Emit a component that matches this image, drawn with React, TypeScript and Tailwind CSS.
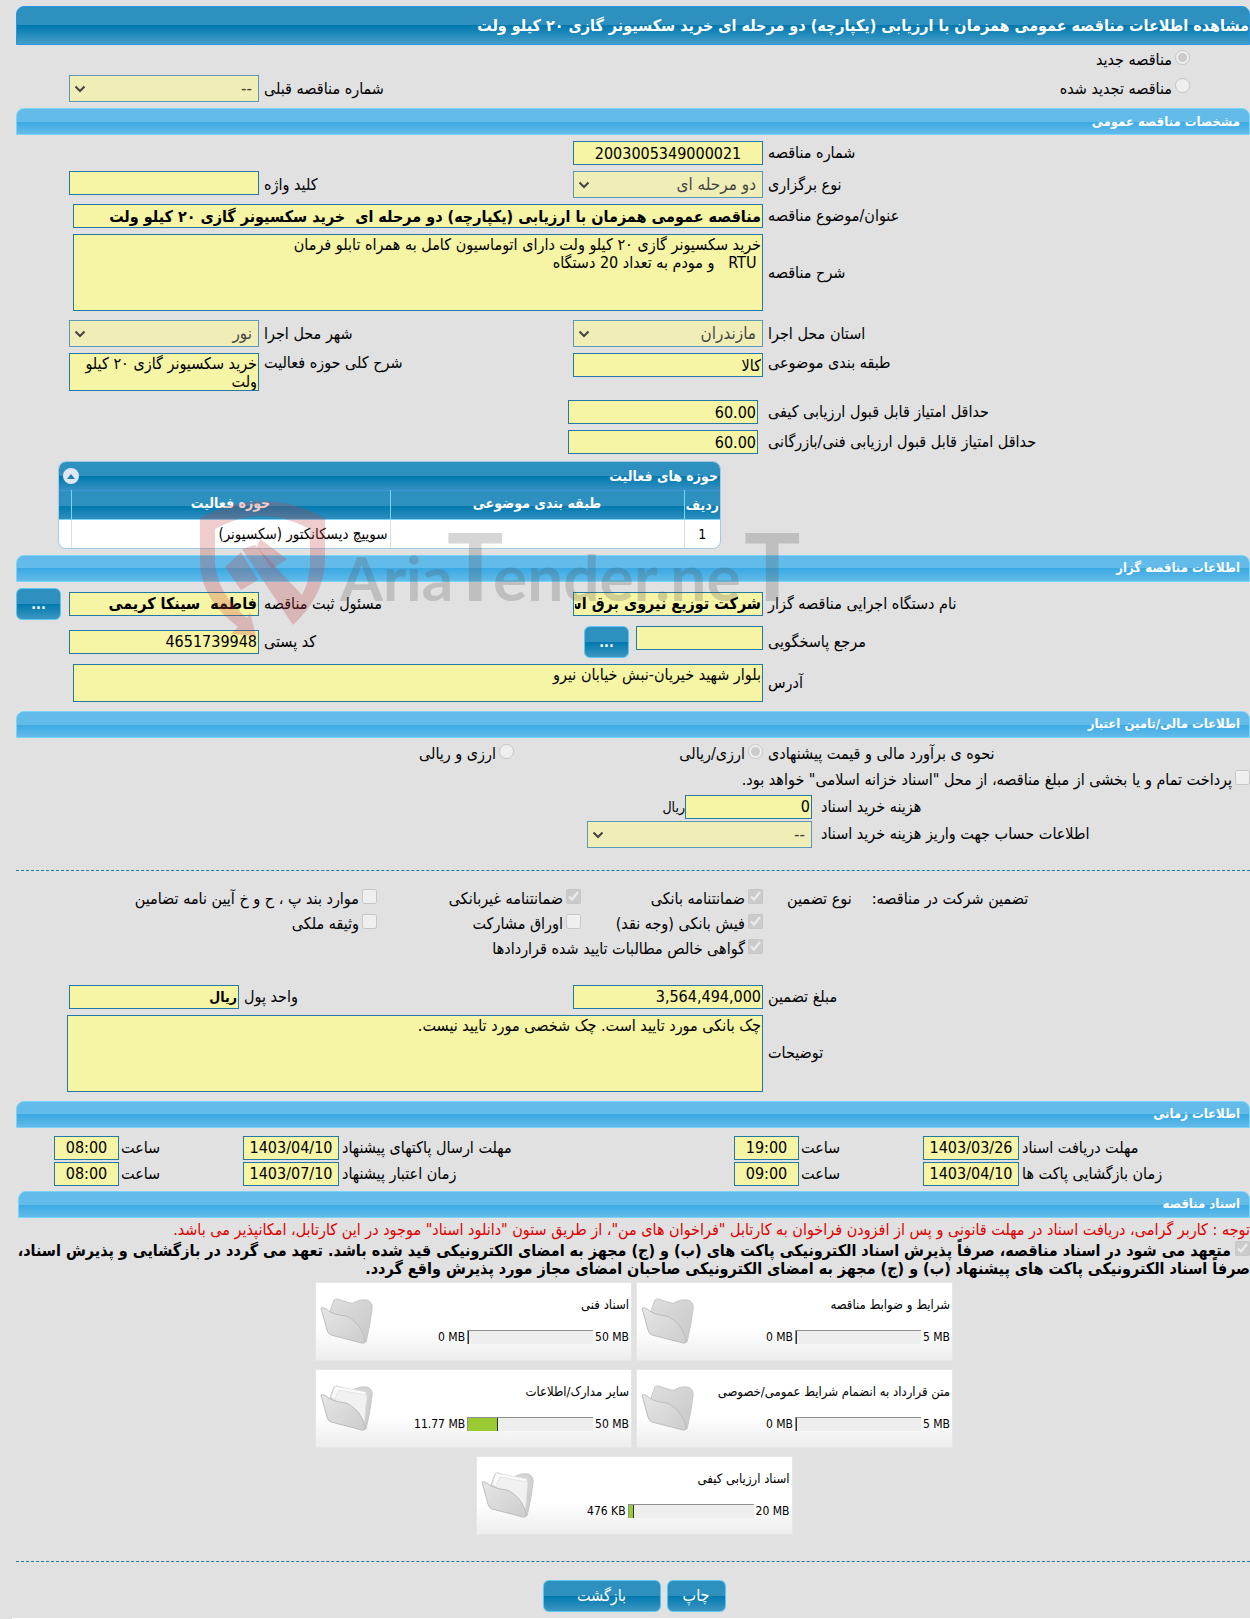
import { useState, type ReactNode } from "react";
import clsx from "clsx";

const inputStyle = "block h-[24px] w-full rounded-none border border-[#2478a5] bg-[#f6f4a5] px-px leading-[20px] text-black outline-none";
const areaStyle = "block w-full resize-none overflow-hidden rounded-none border border-[#2478a5] bg-[#f6f4a5] px-px pt-px leading-[18px] text-black outline-none";
const selectStyle = "block h-[27px] w-full appearance-none rounded-none border border-[#2478a5] bg-[#f6f4a5] pr-[6px] pl-5 text-[17px] text-black";
const rowStyle = "mt-[6px] grid grid-cols-[1fr_190px_314px_190px_53px] pl-4";
const wideRowStyle = "mt-[6px] grid grid-cols-[1fr_690px] pl-[73px]";
const timeRowStyle = "grid grid-cols-[1fr_96px_124px_65px_395px_96px_124px_65px] pl-[54px]";
const buttonStyle =
  "rounded-md border border-[#5cc8f2] bg-[linear-gradient(#2e90be_50%,#0078ae_50%,#3d97c3)] text-white";

type Doc = {
  title: string;
  used: string;
  total: string;
  percent: number;
};

const docs: Doc[] = [
  { title: "شرایط و ضوابط مناقصه", used: "0 MB", total: "5 MB", percent: 0 },
  { title: "اسناد فنی", used: "0 MB", total: "50 MB", percent: 0 },
  { title: "متن قرارداد به انضمام شرایط عمومی/خصوصی", used: "0 MB", total: "5 MB", percent: 0 },
  { title: "سایر مدارک/اطلاعات", used: "11.77 MB", total: "50 MB", percent: 24 },
  { title: "اسناد ارزیابی کیفی", used: "476 KB", total: "20 MB", percent: 4 },
];

const SectionBar = ({ children, className }: { children: ReactNode; className?: string }) => (
  <h2
    className={clsx(
      "flex h-[27px] items-center rounded-t-lg border border-[#79d4f7] bg-[linear-gradient(#62bbe9_50%,#3ba9e3_50%,#62bbe9)] pr-[9px] text-[13px] font-bold text-white",
      className,
    )}
  >
    {children}
  </h2>
);

const Label = ({ id, children, className }: { id: string; children: ReactNode; className?: string }) => (
  <label htmlFor={id} className={clsx("self-center pl-[5px] text-left leading-5", className)}>
    {children}
  </label>
);

type TextProps = { id: string; value?: string; className?: string };

const TextInput = ({ id, value = "", className }: TextProps) => (
  <input id={id} type="text" readOnly value={value} className={clsx(inputStyle, className)} />
);

const Select = ({ id, value }: TextProps) => (
  <div className="relative opacity-70">
    <select id={id} disabled className={selectStyle}>
      <option>{value}</option>
    </select>
    <svg viewBox="0 0 12 8" className="pointer-events-none absolute top-[10px] left-[5px] h-2 w-3" aria-hidden="true">
      <path d="M1.5 1.5 L6 6 L10.5 1.5" fill="none" stroke="#000000" strokeWidth="2" />
    </svg>
  </div>
);

type CheckProps = {
  id: string;
  label: string;
  checked?: boolean;
  type?: "checkbox" | "radio";
  className?: string;
};

const Check = ({ id, label, checked = false, type = "checkbox", className }: CheckProps) => (
  <div className={clsx("flex items-center gap-[3px]", className)}>
    <input id={id} type={type} disabled checked={checked} readOnly className="mb-[6px] h-[15px] w-[15px] shrink-0" />
    <label htmlFor={id}>{label}</label>
  </div>
);

const Folder = ({ full }: { full: boolean }) => (
  <svg viewBox="0 0 54 47" className="h-[47px] w-[54px]" aria-hidden="true">
    <defs>
      <linearGradient id="folderBack" x1="0" y1="0" x2="1" y2="1">
        <stop offset="0" stopColor="#dedede" />
        <stop offset="1" stopColor="#c8c8c8" />
      </linearGradient>
      <linearGradient id="folderFront" x1="0" y1="0" x2="1" y2="1">
        <stop offset="0" stopColor="#e6e6e6" />
        <stop offset="1" stopColor="#cdcdcd" />
      </linearGradient>
    </defs>
    <path d="M10 13 L14 2 Q15 1 17 1 L30 5 Q33 6 35 4 Q40 1 47 2 Q53 4 52 11 Q50 28 46 44 L40 44 Z" fill="url(#folderBack)" stroke="#c6c6c6" />
    {full && (
      <>
        <path d="M11 12 L15 1 L46 7 L45 36 L40 30 Z" fill="#fbfbfb" stroke="#dcdcdc" strokeWidth="0.7" />
        <path d="M15 13 L19 5 L47 10 L44 38 L38 26 Z" fill="#f1f1f1" stroke="#dedede" strokeWidth="0.7" />
      </>
    )}
    <path d="M1 10 Q3 9 6 11 C12 16 18 17 26 18 C34 21 43 31 45 42 Q45 46 42 45 L11 37 Q8 36 7 32 Z" fill="url(#folderFront)" stroke="#bdbdbd" strokeLinejoin="round" />
  </svg>
);

const DocCard = ({ doc }: { doc: Doc }) => (
  <div className="flex h-[79px] w-[317px] items-center justify-between border border-[#e6e6e6] bg-[linear-gradient(#ffffff_60%,#ededed)] pr-[2px] pl-1">
    <div className="flex flex-col gap-4">
      <div className="h-4 w-0 text-[13px] leading-4 whitespace-nowrap">{doc.title}</div>
      <div className="flex items-center gap-[2px] text-xs leading-4">
        <span dir="ltr">{doc.total}</span>
        <div dir="ltr" className="h-[14px] w-[126px] border-t border-l border-[#8f8f8f] bg-[#eeeeee]">
          <div className="h-full border-r border-[#333333] bg-[#9aca32]" style={{ width: `${doc.percent}%`, minWidth: 1 }} />
        </div>
        <span dir="ltr">{doc.used}</span>
      </div>
    </div>
    <Folder full={doc.percent > 0} />
  </div>
);

// Shield and site name laid over the middle of the form
const Watermark = () => (
  <svg viewBox="0 0 610 150" className="pointer-events-none absolute top-[495px] left-[195px] w-[610px]" aria-hidden="true">
    <g fill="#c43c3c" fillOpacity="0.26">
      <path
        fillRule="evenodd"
        d="M5 23 Q35 6 67 6 Q99 6 130 23 V68 Q128 102 98 130 L47 54 L60 50 L107 100 Q115 85 115 68 V34 Q91 21 67 21 Q43 21 20 34 V68 Q22 98 52 123 L55 117 L61 141 L36 139 L43 132 Q6 104 5 68 Z"
      />
      <path d="M30 72 L46 57 L63 85 L46 95 Z" />
      <path d="M65 44 L92 64 L77 74 L62 52 Z" />
    </g>
    <text
      y="106"
      fontWeight="bold"
      fill="#555555"
      fillOpacity="0.24"
      direction="ltr"
      className="font-[Lato,'Liberation_Sans',sans-serif]"
    >
      <tspan x="145" fontSize="62">Aria</tspan>
      <tspan x="252" fontSize="94">T</tspan>
      <tspan x="298" fontSize="64">ender.ne</tspan>
      <tspan x="549" fontSize="94">T</tspan>
    </text>
  </svg>
);

const App = () => {
  const [open, setOpen] = useState(true);

  return (
    <main
      dir="rtl"
      className="relative min-h-screen overflow-hidden bg-[#e1e1e1] pt-[6px] font-['DejaVu_Sans_Condensed','DejaVu_Sans',sans-serif] text-base text-black"
    >
      <h1 className="ml-4 flex h-[39px] items-center rounded-t-lg border border-[#2694e8] bg-[linear-gradient(#2e90be_50%,#0078ae_50%,#459fc9)] font-bold text-white">
        مشاهده اطلاعات مناقصه عمومی همزمان با ارزیابی (یکپارچه) دو مرحله ای خرید سکسیونر گازی ۲۰ کیلو ولت
      </h1>

      {/* Tender kind */}
      <div className="flex h-[30px] items-center pr-[60px]">
        <Check id="newTender" type="radio" label="مناقصه جدید" checked />
      </div>
      <div className="flex h-[27px] items-center pr-[60px] pl-[69px]">
        <Check id="renewedTender" type="radio" label="مناقصه تجدید شده" className="flex-1" />
        <Label id="previousNumber">شماره مناقصه قبلی</Label>
        <div className="w-[190px]">
          <Select id="previousNumber" value="--" />
        </div>
      </div>

      {/* General */}
      <SectionBar className="mt-[6px] ml-4">مشخصات مناقصه عمومی</SectionBar>
      <div className={rowStyle}>
        <Label id="tenderNumber">شماره مناقصه</Label>
        <TextInput id="tenderNumber" value="2003005349000021" className="text-center" />
      </div>
      <div className={rowStyle}>
        <Label id="tenderType">نوع برگزاری</Label>
        <Select id="tenderType" value="دو مرحله ای" />
        <Label id="keyword">کلید واژه</Label>
        <TextInput id="keyword" />
      </div>
      <div className={wideRowStyle}>
        <Label id="subject">عنوان/موضوع مناقصه</Label>
        <TextInput
          id="subject"
          className="font-bold"
          value={"مناقصه عمومی همزمان با ارزیابی (یکپارچه) دو مرحله ای  خرید سکسیونر گازی ۲۰ کیلو ولت"}
        />
      </div>
      <div className={wideRowStyle}>
        <Label id="description">شرح مناقصه</Label>
        <textarea
          id="description"
          readOnly
          className={clsx(areaStyle, "h-[77px]")}
          value={"خرید سکسیونر گازی ۲۰ کیلو ولت دارای اتوماسیون کامل به همراه تابلو فرمان\n RTU   و مودم به تعداد 20 دستگاه"}
        />
      </div>
      <div className={clsx(rowStyle, "pt-[3px]")}>
        <Label id="province">استان محل اجرا</Label>
        <Select id="province" value="مازندران" />
        <Label id="city">شهر محل اجرا</Label>
        <Select id="city" value="نور" />
      </div>
      <div className={rowStyle}>
        <Label id="category" className="self-start!">طبقه بندی موضوعی</Label>
        <TextInput id="category" value="کالا" />
        <Label id="activity" className="self-start!">شرح کلی حوزه فعالیت</Label>
        <textarea id="activity" readOnly className={clsx(areaStyle, "h-[38px]")} value="خرید سکسیونر گازی ۲۰ کیلو ولت" />
      </div>
      <div className="mt-[9px] grid grid-cols-[1fr_190px] gap-y-[6px] pl-[568px]">
        <Label id="qualityScore" className="pl-[10px]!">حداقل امتیاز قابل قبول ارزیابی کیفی</Label>
        <TextInput id="qualityScore" value="60.00" />
        <Label id="technicalScore" className="pl-[10px]!">حداقل امتیاز قابل قبول ارزیابی فنی/بازرگانی</Label>
        <TextInput id="technicalScore" value="60.00" />
      </div>

      {/* Activity table */}
      <div className="mt-[7px] mr-auto ml-[58px] w-[663px] overflow-hidden rounded-lg border border-[#a6c9e2] bg-white text-[15px]">
        <div className="flex h-[28px] items-center justify-between bg-[linear-gradient(#2e90be_50%,#0078ae_50%,#3391c0)] pr-[2px] pl-1 text-sm font-bold text-white">
          <span>حوزه های فعالیت</span>
          <button
            type="button"
            aria-label="بستن"
            onClick={() => setOpen(!open)}
            className="flex h-4 w-4 items-center justify-center rounded-full bg-[#dfe6f5]"
          >
            <svg viewBox="0 0 8 5" className="h-[5px] w-[8px]">
              <path d="M0 5 L4 0 L8 5 Z" fill="#1f7fb0" />
            </svg>
          </button>
        </div>
        {open && (
          <table className="w-full table-fixed border-collapse">
            <colgroup>
              <col className="w-[36px]" />
              <col className="w-[294px]" />
              <col />
              <col className="w-[12px]" />
            </colgroup>
            <thead>
              <tr className="h-[29px] border-t border-[#3f93d8] bg-[linear-gradient(#2e90be_50%,#0078ae_50%,#3391c0)] text-sm text-white">
                <th className="border-l border-[#79d4f7]">ردیف</th>
                <th className="border-l border-[#79d4f7] pb-1">طبقه بندی موضوعی</th>
                <th className="border-l border-[#79d4f7] pb-1">حوزه فعالیت</th>
                <th />
              </tr>
            </thead>
            <tbody>
              <tr className="h-[28px] border-t border-[#79d4f7]">
                <td className="border-l border-[#dddddd] text-center text-sm">1</td>
                <td className="border-l border-[#dddddd]" />
                <td className="border-l border-[#dddddd] pr-[2px] leading-5">سوییچ دیسکانکتور (سکسیونر)</td>
                <td />
              </tr>
            </tbody>
          </table>
        )}
      </div>

      {/* Requester */}
      <SectionBar className="mt-[6px] ml-4">اطلاعات مناقصه گزار</SectionBar>
      <div className={clsx(rowStyle, "items-center")}>
        <Label id="agency">نام دستگاه اجرایی مناقصه گزار</Label>
        <TextInput id="agency" className="font-bold" value="شرکت توزیع نیروی برق استان مازندران" />
        <Label id="officer">مسئول ثبت مناقصه</Label>
        <TextInput id="officer" className="font-bold" value="فاطمه  سینکا کریمی" />
        <button type="button" className={clsx(buttonStyle, "h-8 w-[45px] justify-self-end text-sm font-bold")}>...</button>
      </div>
      <div className={clsx(rowStyle, "items-center")}>
        <Label id="contact">مرجع پاسخگویی</Label>
        <div className="flex gap-[7px]">
          <div className="w-[127px]">
            <TextInput id="contact" />
          </div>
          <button type="button" className={clsx(buttonStyle, "h-8 w-[45px] text-sm font-bold")}>...</button>
        </div>
        <Label id="postalCode">کد پستی</Label>
        <TextInput id="postalCode" value="4651739948" />
      </div>
      <div className={wideRowStyle}>
        <Label id="address">آدرس</Label>
        <textarea id="address" readOnly className={clsx(areaStyle, "h-[38px]")} value="بلوار شهید خیریان-نبش خیابان نیرو" />
      </div>

      {/* Finance */}
      <SectionBar className="mt-[9px] ml-4">اطلاعات مالی/تامین اعتبار</SectionBar>
      <div className="mt-[3px] grid h-[27px] grid-cols-[1fr_249px_514px] items-center">
        <span className="pl-[5px] text-left">نحوه ی برآورد مالی و قیمت پیشنهادی</span>
        <Check id="singleCurrency" type="radio" label="ارزی/ریالی" checked />
        <Check id="bothCurrencies" type="radio" label="ارزی و ریالی" />
      </div>
      <Check
        id="treasury"
        label={'پرداخت تمام و یا بخشی از مبلغ مناقصه، از محل "اسناد خزانه اسلامی" خواهد بود.'}
        className="h-[25px]"
      />
      <div className="mt-[2px] grid grid-cols-[1fr_127px_685px]">
        <Label id="docCost" className="pl-[9px]!">هزینه خرید اسناد</Label>
        <TextInput id="docCost" value="0" />
        <span className="self-center text-sm">ریال</span>
      </div>
      <div className="mt-[2px] grid grid-cols-[1fr_225px] pl-[587px]">
        <Label id="account" className="pl-[9px]!">اطلاعات حساب جهت واریز هزینه خرید اسناد</Label>
        <Select id="account" value="--" />
      </div>

      <div className="mt-[22px] ml-4 border-t border-dashed border-[#2478a5]" />

      {/* Guarantee */}
      <div className="mt-4 grid auto-rows-[25px] grid-cols-[1fr_182px_204px_377px] items-center">
        <div className="flex justify-end gap-5 pl-6">
          <span>تضمین شرکت در مناقصه:</span>
          <span>نوع تضمین</span>
        </div>
        <Check id="bankGuarantee" label="ضمانتنامه بانکی" checked />
        <Check id="nonBankGuarantee" label="ضمانتنامه غیربانکی" checked />
        <Check id="clauses" label="موارد بند پ ، ح و خ آیین نامه تضامین" />
        <Check id="cash" label="فیش بانکی (وجه نقد)" checked className="col-start-2" />
        <Check id="bonds" label="اوراق مشارکت" />
        <Check id="property" label="وثیقه ملکی" />
        <Check id="claims" label="گواهی خالص مطالبات تایید شده قراردادها" checked className="col-span-3 col-start-2" />
      </div>
      <div className="mt-[23px] grid grid-cols-[1fr_190px_334px_170px] pl-[69px]">
        <Label id="amount">مبلغ تضمین</Label>
        <TextInput id="amount" value="3,564,494,000" />
        <Label id="currency">واحد پول</Label>
        <TextInput id="currency" className="text-sm font-bold" value="ریال" />
      </div>
      <div className="mt-[6px] grid grid-cols-[1fr_696px] pl-[67px]">
        <Label id="notes">توضیحات</Label>
        <textarea id="notes" readOnly className={clsx(areaStyle, "h-[77px]")} value="چک بانکی مورد تایید است. چک شخصی مورد تایید نیست." />
      </div>

      {/* Time */}
      <SectionBar className="mt-[9px] ml-4">اطلاعات زمانی</SectionBar>
      <div className={clsx(timeRowStyle, "mt-2 gap-y-[2px]")}>
        <Label id="receiveDate" className="pl-[3px]!">مهلت دریافت اسناد</Label>
        <TextInput id="receiveDate" className="text-center" value="1403/03/26" />
        <Label id="receiveHour" className="pl-[2px]!">ساعت</Label>
        <TextInput id="receiveHour" className="text-center" value="19:00" />
        <Label id="sendDate" className="pl-[3px]!">مهلت ارسال پاکتهای پیشنهاد</Label>
        <TextInput id="sendDate" className="text-center" value="1403/04/10" />
        <Label id="sendHour" className="pl-[2px]!">ساعت</Label>
        <TextInput id="sendHour" className="text-center" value="08:00" />
        <Label id="openDate" className="pl-[3px]!">زمان بازگشایی پاکت ها</Label>
        <TextInput id="openDate" className="text-center" value="1403/04/10" />
        <Label id="openHour" className="pl-[2px]!">ساعت</Label>
        <TextInput id="openHour" className="text-center" value="09:00" />
        <Label id="validDate" className="pl-[3px]!">زمان اعتبار پیشنهاد</Label>
        <TextInput id="validDate" className="text-center" value="1403/07/10" />
        <Label id="validHour" className="pl-[2px]!">ساعت</Label>
        <TextInput id="validHour" className="text-center" value="08:00" />
      </div>

      {/* Documents */}
      <SectionBar className="mt-[5px] ml-[18px]">اسناد مناقصه</SectionBar>
      <p className="mt-px leading-[22px] whitespace-nowrap text-[#dd0000]">
        توجه : کاربر گرامی، دریافت اسناد در مهلت قانونی و پس از افزودن فراخوان به کارتابل "فراخوان های من"، از طریق ستون "دانلود اسناد" موجود در این کارتابل، امکانپذیر می باشد.
      </p>
      <div className="leading-[18px] font-bold whitespace-nowrap">
        <input id="commit" type="checkbox" disabled checked readOnly className="ml-1 h-[15px] w-[15px]" />
        <label htmlFor="commit">
          متعهد می شود در اسناد مناقصه، صرفاً پذیرش اسناد الکترونیکی پاکت های (ب) و (ج) مجهز به امضای الکترونیکی قید شده باشد. تعهد می گردد در بازگشایی و پذیرش اسناد،
          <br />
          صرفاً اسناد الکترونیکی پاکت های پیشنهاد (ب) و (ج) مجهز به امضای الکترونیکی صاحبان امضای مجاز مورد پذیرش واقع گردد.
        </label>
      </div>
      <div className="mt-1 ml-[18px] flex flex-wrap justify-center gap-x-1 gap-y-[8px] px-[280px]">
        {docs.map((doc) => (
          <DocCard key={doc.title} doc={doc} />
        ))}
      </div>

      <div className="mt-[26px] ml-4 border-t border-dashed border-[#2478a5]" />
      <div className="mt-[18px] mb-[6px] ml-[18px] flex justify-center gap-[6px]">
        <button type="button" className={clsx(buttonStyle, "h-8 w-[59px]")}>چاپ</button>
        <button type="button" className={clsx(buttonStyle, "h-8 w-[118px]")}>بازگشت</button>
      </div>
      <div className="ml-3 h-px bg-white" />

      <Watermark />
    </main>
  );
};

export default App;
